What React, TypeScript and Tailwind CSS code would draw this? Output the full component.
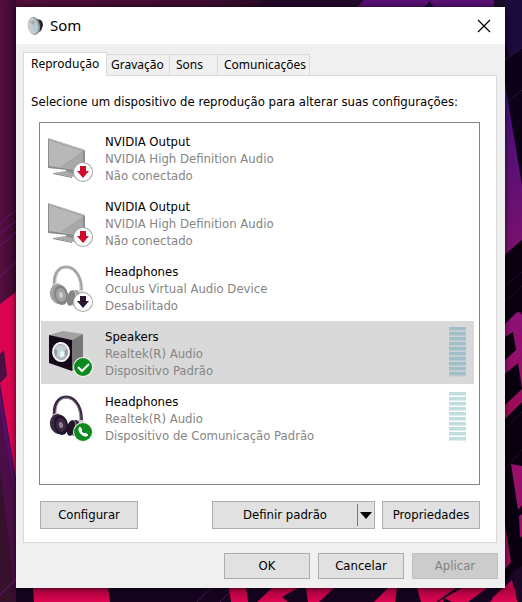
import type { ReactNode } from "react";

type IconKind = "monitor" | "headphonesGray" | "speaker" | "headphones";
type BadgeKind = "unplugged" | "disabled" | "check" | "phone";

interface Device {
  id: number;
  name: string;
  driver: string;
  status: string;
  icon: IconKind;
  badge: BadgeKind;
  selected?: boolean;
  meter?: boolean;
}

const devices: Device[] = [
  { id: 1, name: "NVIDIA Output", driver: "NVIDIA High Definition Audio", status: "Não conectado", icon: "monitor", badge: "unplugged" },
  { id: 2, name: "NVIDIA Output", driver: "NVIDIA High Definition Audio", status: "Não conectado", icon: "monitor", badge: "unplugged" },
  { id: 3, name: "Headphones", driver: "Oculus Virtual Audio Device", status: "Desabilitado", icon: "headphonesGray", badge: "disabled" },
  { id: 4, name: "Speakers", driver: "Realtek(R) Audio", status: "Dispositivo Padrão", icon: "speaker", badge: "check", selected: true, meter: true },
  { id: 5, name: "Headphones", driver: "Realtek(R) Audio", status: "Dispositivo de Comunicação Padrão", icon: "headphones", badge: "phone", meter: true },
];

function Monitor() {
  return (
    <g>
      <path d="M20 30 L29 33 L28 42 L20 40Z" fill="#8d8d8d" />
      <path d="M7 39 L19 37 L32 41 L26 43Z" fill="#a9a9a9" />
      <path d="M7 39 L26 43 V44 L7 40Z" fill="#858585" />
      <path d="M2 4 L39 16 V38 L2 34Z" fill="#8c8c8c" />
      <path d="M3 6 L37 17 V37 L3 32Z" fill="#b8b8b8" />
      <path d="M37 17 V37 L14 33 Z" fill="#a8a8a8" />
      <path d="M2 4 L39 16 V17 L2 5Z" fill="#c8c8c8" />
    </g>
  );
}

function HeadphoneShape({ gray }: { gray?: boolean }) {
  const dark = gray ? "#858585" : "#22142a";
  const mid = gray ? "#a3a3a3" : "#3b2a42";
  const light = gray ? "#cdcdcd" : "#8d8296";
  return (
    <g>
      <path d="M9 25 C6 10 13 3 20 3 C30 3 37 15 35 30" fill="none" stroke={mid} strokeWidth="3" />
      <path d="M10 22 C9 10 14 4 20 4 C28 4 35 14 34 27" fill="none" stroke={light} strokeWidth="1" />
      <path d="M6 21 L12 18 L16 22 L7 27Z" fill={gray ? "#d9d9d9" : "#d6d2d9"} />
      <path d="M28 26 L36 26 L43 31 L38 38 L28 40Z" fill={gray ? "#dedede" : "#cdc8d1"} />
      <ellipse cx="12" cy="30" rx="8" ry="10" transform="rotate(-12 12 30)" fill={mid} />
      <ellipse cx="15" cy="31" rx="7" ry="10" transform="rotate(-12 15 31)" fill={dark} />
      <ellipse cx="15" cy="31" rx="5" ry="7" transform="rotate(-12 15 31)" fill={mid} />
      <ellipse cx="15" cy="31" rx="2" ry="3" transform="rotate(-12 15 31)" fill={light} />
      <ellipse cx="29" cy="34" rx="5" ry="8" transform="rotate(12 29 34)" fill={mid} />
      <ellipse cx="26" cy="34" rx="4" ry="8" transform="rotate(12 26 34)" fill={light} />
      <ellipse cx="25" cy="34" rx="4" ry="8" transform="rotate(12 25 34)" fill={dark} />
    </g>
  );
}

function SpeakerBox() {
  return (
    <g>
      <path d="M3 6 L17 2 L37 5 L26 11Z" fill="#a2a2a2" />
      <path d="M26 11 L37 5 V36 L26 42Z" fill="#777777" />
      <path d="M3 6 L26 11 V42 L3 34Z" fill="#150a1a" />
      <ellipse cx="15" cy="23" rx="9" ry="10" transform="rotate(-8 15 23)" fill="#f4f4f4" />
      <ellipse cx="15" cy="23" rx="7" ry="8" transform="rotate(-8 15 23)" fill="#969b9e" />
      <path d="M9 20 C10 15 19 14 21 20 L15 24Z" fill="#c4c8ca" />
      <path d="M9 27 C12 32 19 31 21 27 L15 23Z" fill="#b4b9bb" />
      <ellipse cx="15" cy="24" rx="4" ry="5" fill="#bdd6dd" />
      <ellipse cx="16" cy="25" rx="2" ry="3" fill="#edf8fa" />
    </g>
  );
}

function Badge({ kind }: { kind: BadgeKind }) {
  const green = kind === "check" || kind === "phone";
  return (
    <g>
      <circle cx="37" cy="38" r="10" fill={green ? "#f4f4f4" : "#a5a5a5"} />
      <circle cx="37" cy="38" r="9" fill={green ? "#0c8a20" : "#ffffff"} />
      {kind === "unplugged" && <path d="M34 32 H40 V37 H43 L37 44 L31 37 H34Z" fill="#cf0b2b" />}
      {kind === "disabled" && <path d="M34 32 H40 V37 H43 L37 44 L31 37 H34Z" fill="#2a1530" />}
      {kind === "check" && <path d="M32 38 L36 42 L43 35" fill="none" stroke="#ffffff" strokeWidth="2" />}
      {kind === "phone" && (
        <path d="M33 34 L34 33 L36 36 L35 37 L38 40 L39 39 L42 41 L41 42 C37 43 32 38 33 34Z" fill="#ffffff" stroke="#ffffff" strokeWidth="1" strokeLinejoin="round" />
      )}
    </g>
  );
}

function DeviceIcon({ icon, badge }: { icon: IconKind; badge: BadgeKind }) {
  return (
    <svg viewBox="0 0 48 48" className="size-12 shrink-0" aria-hidden="true">
      {icon === "monitor" && <Monitor />}
      {icon === "headphonesGray" && <HeadphoneShape gray />}
      {icon === "headphones" && <HeadphoneShape />}
      {icon === "speaker" && <SpeakerBox />}
      <Badge kind={badge} />
    </svg>
  );
}

function Meter({ selected }: { selected?: boolean }) {
  return (
    <div className="flex w-[17px] flex-col">
      {Array.from({ length: 10 }, (_, i) => (
        <div
          key={i}
          className={
            selected
              ? "h-[5px] border-b border-[#ccd2d4] bg-[#bccdd1]"
              : "h-[5px] border-b border-white bg-[#dfeff0]"
          }
        >
          <div className={selected ? "h-[3px] bg-[#a2bfc9]" : "h-[3px] bg-[#c2dde0]"} />
        </div>
      ))}
    </div>
  );
}

function DeviceRow({ device }: { device: Device }) {
  return (
    <li
      role="option"
      aria-selected={!!device.selected}
      className={
        device.selected
          ? "flex h-[63px] items-start bg-[#d9d9d9] pl-[5px] pr-2"
          : "flex h-[63px] items-start pl-[5px] pr-2"
      }
    >
      <div className="pt-2">
        <DeviceIcon icon={device.icon} badge={device.badge} />
      </div>
      <div className="min-w-0 flex-1 pl-[11px] pt-[7px] leading-[17px]">
        <p className="text-black">{device.name}</p>
        <p className="text-[#858585]">{device.driver}</p>
        <p className="text-[#858585]">{device.status}</p>
      </div>
      {device.meter && (
        <div className="pt-1.5">
          <Meter selected={device.selected} />
        </div>
      )}
    </li>
  );
}

function Tab({ active, width, children }: { active?: boolean; width: string; children: ReactNode }) {
  return (
    <button
      type="button"
      role="tab"
      aria-selected={!!active}
      className={
        active
          ? "relative z-10 -mb-px -mr-px h-6 border border-b-0 border-[#d9d9d9] bg-white pb-0.5 text-left leading-5 " + width
          : "h-[21px] border border-b-0 border-l-0 border-[#d9d9d9] bg-[#f0f0f0] text-left leading-5 " + width
      }
    >
      {children}
    </button>
  );
}

function Wallpaper() {
  return (
    <svg
      viewBox="0 0 522 602"
      preserveAspectRatio="none"
      className="absolute inset-0 size-full"
      aria-hidden="true"
    >
      <defs>
        <linearGradient id="topBar" x1="0" x2="1" y1="0" y2="0">
          <stop offset="0" stopColor="#55103a" />
          <stop offset="0.4" stopColor="#3f0c30" />
          <stop offset="0.55" stopColor="#260a24" />
          <stop offset="1" stopColor="#1c0a2c" />
        </linearGradient>
        <linearGradient id="leftBar" x1="0" x2="16" y1="0" y2="0" gradientUnits="userSpaceOnUse">
          <stop offset="0" stopColor="#560f3f" />
          <stop offset="1" stopColor="#390a30" />
        </linearGradient>
        <linearGradient id="violet" x1="0" x2="0" y1="0" y2="1">
          <stop offset="0" stopColor="#3f107c" />
          <stop offset="1" stopColor="#7c116e" />
        </linearGradient>
        <linearGradient id="letter" x1="0" x2="0" y1="0" y2="1">
          <stop offset="0" stopColor="#8b1178" />
          <stop offset="1" stopColor="#a00c58" />
        </linearGradient>
        <linearGradient id="pinkBase" x1="0" x2="0" y1="588" y2="602" gradientUnits="userSpaceOnUse">
          <stop offset="0" stopColor="#a8043f" />
          <stop offset="1" stopColor="#dc0450" />
        </linearGradient>
      </defs>
      <rect width="522" height="602" fill="#16041f" />
      <rect width="522" height="8" fill="url(#topBar)" />
      <path d="M255 8 L262 0 H360 L352 8Z" fill="#25092a" />
      <path d="M356 8 L364 0 H494 V8Z" fill="#5a1075" />
      <path d="M424 8 L430 1 L434 8Z" fill="#1b0c3d" />
      <rect width="16" height="602" fill="url(#leftBar)" />
      <path d="M0 223 L16 210 M0 233 L16 221 M0 246 L16 232 M0 277 L16 262" stroke="#6b1078" />
      <path d="M0 304 L16 292 V480 L0 383Z" fill="#da0450" />
      <path d="M0 354 L4 350 L7 376 L0 383Z" fill="#4d0f42" />
      <path d="M0 385 L16 480 V588 H0Z" fill="#4b0e48" />
      <path d="M0 390 L13 466 L16 500 L0 410Z" fill="#570d6c" />
      <path d="M0 470 L11 560 L14 602 H0Z" fill="#35112b" />
      <path d="M0 595 L16 579" stroke="#7b1488" />
      <path d="M505 0 H522 V110 L505 40Z" fill="#1b0c3d" />
      <path d="M505 60 L522 48 V190 L505 90Z" fill="#0b0218" />
      <path d="M505 60 L522 48 M505 104 L522 90" stroke="#2a1640" />
      <path d="M505 83 L522 185 V240 L505 255Z" fill="url(#violet)" />
      <path d="M505 255 L522 240 V602 H505Z" fill="#09000f" />
      <path d="M505 286 L522 272 M505 302 L522 286 M505 428 L522 412 M505 470 L522 450" stroke="#240a33" />
      <path
        fillRule="evenodd"
        d="M505 324 L516 313 Q520 310 522 315 V402 L505 419Z M505 337 L513 332 L516 350 L505 360Z M505 374 L518 363 L522 389 L505 405Z"
        fill="url(#letter)"
      />
      <path d="M511 464 L522 466 V505 L518 510Z" fill="#97106a" />
      <path d="M505 524 L511 562 L505 569Z" fill="#a00e58" />
      <path d="M519 516 L522 514 V536 L520 538Z" fill="#97106a" />
      <path d="M505 583 L514 570 L522 566 V602 H505Z" fill="#1b0626" />
      <path d="M492 598 L512 580 L517 602 H494Z" fill="#b4064b" />
      <g fill="url(#pinkBase)">
        <path d="M33 588 H108 L110 602 H34Z" />
        <path d="M229 588 H246 L248 602 H231Z" />
        <path d="M272 588 H298 L282 597 L288 602 H257Z" />
        <path d="M306 588 H334 L319 602 H308Z" />
        <path d="M388 588 H397 L395 602 H374Z" />
        <path d="M417 588 H456 L436 602 H421Z" />
        <path d="M462 588 H487 L468 602 H452L444 598 L443 602 H438Z" />
        <path d="M503 588 H515 L517 602 H490Z" />
      </g>
      <path d="M197 602 L211 588 M220 602 L230 592" stroke="#4b0f5c" />
    </svg>
  );
}

const button =
  "border border-[#adadad] bg-[#e1e1e1] text-center text-black";

export default function App() {
  return (
    <div className="relative min-h-screen overflow-hidden bg-[#16041f] pb-3.5 pl-4 pr-[17px] pt-[7px] font-['DejaVu_Sans_Condensed','Noto_Sans',sans-serif] text-[13px] text-black">
      <Wallpaper />
      <main className="relative bg-[#f0f0f0] shadow-[0_0_6px_rgba(0,0,0,0.7)]">
        <header className="flex h-[37px] items-center bg-white pl-[11px] pr-3.5">
          <svg viewBox="0 0 18 20" className="h-5 w-[18px]" aria-hidden="true">
            <path d="M7 2 L14 4 L16 9 L14 15 L8 18Z" fill="#4a4550" />
            <path d="M12 4 L15 5 L16 9 L14 14 L12 13Z" fill="#2b2431" />
            <ellipse cx="7" cy="10" rx="6" ry="9" transform="rotate(-10 7 10)" fill="#8f9496" />
            <ellipse cx="6" cy="10" rx="5" ry="8" transform="rotate(-10 6 10)" fill="#c6cccd" />
            <path d="M3 6 L8 4 L7 10Z" fill="#a2a6a8" />
            <ellipse cx="8" cy="11" rx="2" ry="4" fill="#a9ccd5" />
          </svg>
          <h1 className="flex-1 pb-0.5 pl-[5px] font-['Noto_Sans'] text-[15px] leading-5">Som</h1>
          <button type="button" aria-label="Fechar" className="size-3.5">
            <svg viewBox="0 0 14 14" className="size-3.5" aria-hidden="true">
              <path d="M1 1 L13 13 M13 1 L1 13" stroke="#000000" strokeWidth="1.2" />
            </svg>
          </button>
        </header>

        <div className="pl-[7px] pr-2 pt-2">
          <div role="tablist" className="flex items-end font-['Noto_Sans'] text-[12px]">
            <Tab active width="w-21 pl-[7px]">Reprodução</Tab>
            <Tab width="w-16 pl-[5px]">Gravação</Tab>
            <Tab width="w-12 pl-1.5">Sons</Tab>
            <Tab width="w-[92px] pl-1.5">Comunicações</Tab>
          </div>

          <section role="tabpanel" className="border border-[#d9d9d9] bg-white pb-[13px] pl-[15px] pr-4 pt-4">
            <p id="prompt" className="-ml-2 h-5 whitespace-nowrap leading-5">
              Selecione um dispositivo de reprodução para alterar suas configurações:
            </p>
            <ul
              role="listbox"
              aria-labelledby="prompt"
              className="mt-2.5 flex h-[363px] flex-col gap-0.5 border border-[#828290] bg-white pl-px pr-[5px] pt-[3px]"
            >
              {devices.map((device) => (
                <DeviceRow key={device.id} device={device} />
              ))}
            </ul>
            <div className="mt-4 flex h-7 pl-px">
              <button type="button" className={`${button} w-[98px]`}>Configurar</button>
              <div className="ml-auto flex w-[163px] border border-[#adadad] bg-[#e1e1e1]">
                <button type="button" className="flex-1">Definir padrão</button>
                <button type="button" aria-label="Mais opções" className="flex w-[17px] items-center py-0.5">
                  <span className="h-full w-px bg-[#7c7674]" />
                  <svg viewBox="0 0 12 7" className="ml-0.5 h-[7px] w-3" aria-hidden="true">
                    <path d="M0 0 H12 L6 7Z" fill="#000000" />
                  </svg>
                </button>
              </div>
              <button type="button" className={`${button} ml-[7px] w-[98px]`}>Propriedades</button>
            </div>
          </section>
        </div>

        <footer className="flex justify-end gap-2 pb-[9px] pr-[7px] pt-2.5">
          <button type="button" className={`${button} h-[26px] w-[86px]`}>OK</button>
          <button type="button" className={`${button} h-[26px] w-[86px]`}>Cancelar</button>
          <button type="button" disabled className="h-[26px] w-[86px] border border-[#bfbfbf] bg-[#cccccc] text-[#838383]">
            Aplicar
          </button>
        </footer>
      </main>
    </div>
  );
}
